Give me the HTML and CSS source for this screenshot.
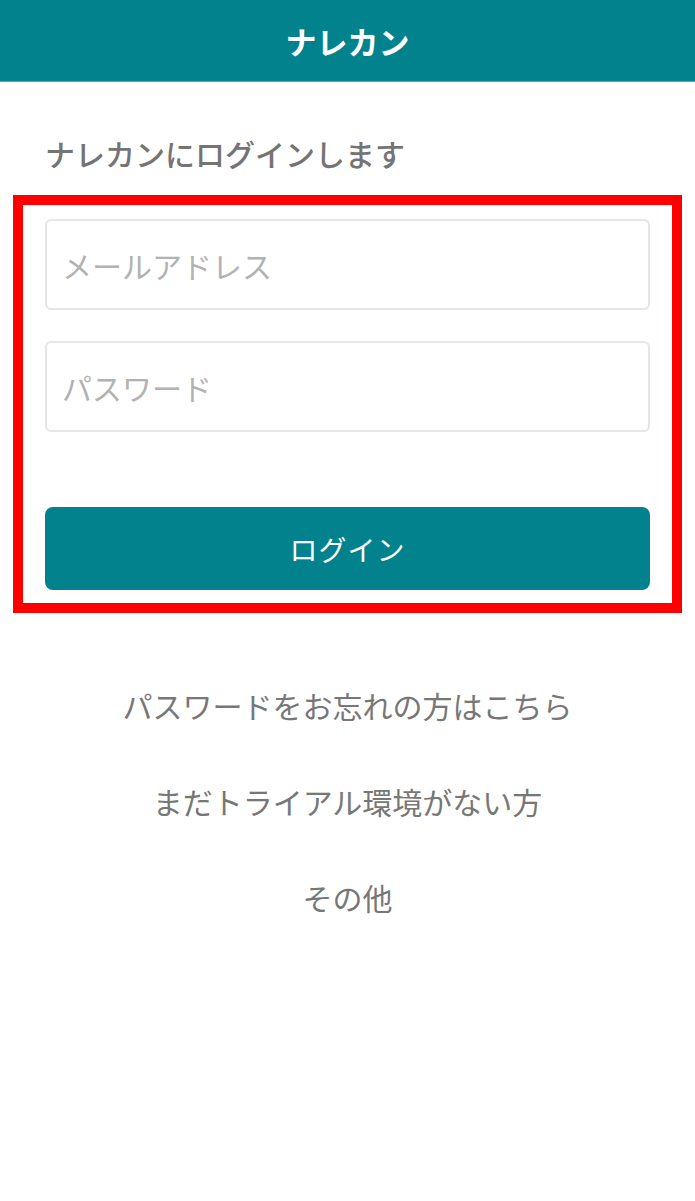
FILE: index.html
```html
<!DOCTYPE html>
<html lang="ja">
<head>
<meta charset="utf-8">
<title>ナレカン</title>
<link rel="stylesheet" href="styles.css">
</head>
<body>
<header class="app-header">
  <h1 class="app-title">ナレカン</h1>
</header>
<main class="page">
  <p class="lead">ナレカンにログインします</p>
  <form class="login-box">
    <input class="field" type="email" placeholder="メールアドレス">
    <input class="field field-password" type="password" placeholder="パスワード">
    <button class="login-button" type="button">ログイン</button>
  </form>
  <nav class="links">
    <a class="link" href="#">パスワードをお忘れの方はこちら</a>
    <a class="link" href="#">まだトライアル環境がない方</a>
    <a class="link" href="#">その他</a>
  </nav>
</main>
</body>
</html>
```

FILE: styles.css
```css
* {
  box-sizing: border-box;
}

html, body {
  margin: 0;
  padding: 0;
  background: #ffffff;
}

body {
  font-family: "Noto Sans CJK JP", "Noto Sans", sans-serif;
  color: #757575;
}

.app-header {
  height: 82px;
  background: #02828c;
  border-bottom: 1px solid #5aa9ae;
  display: flex;
  align-items: center;
  justify-content: center;
}

.app-title {
  margin: 0;
  font-size: 31px;
  font-weight: 700;
  color: #ffffff;
  line-height: 40px;
}

.page {
  display: flex;
  flex-direction: column;
}

.lead {
  margin: 51px 0 0 45px;
  font-size: 30px;
  font-weight: 500;
  line-height: 40px;
  color: #747474;
}

.login-box {
  margin: 22px 0 0 13px;
  width: 669px;
  height: 418px;
  border: 10px solid #ff0000;
  padding: 14px 22px 13px;
  display: flex;
  flex-direction: column;
}

.field {
  display: block;
  width: 100%;
  height: 91px;
  border: 2px solid #e6e6e6;
  border-radius: 6px;
  padding: 0 0 0 15px;
  font-family: inherit;
  font-size: 30px;
  color: #555;
  background: #fff;
  outline: none;
}

.field::placeholder {
  color: #b2b2b2;
}

.field-password {
  margin-top: 31px;
}

.login-button {
  margin-top: 75px;
  height: 83px;
  width: 100%;
  border: none;
  border-radius: 8px;
  background: #02828c;
  color: #ffffff;
  font-family: inherit;
  font-size: 28px;
  font-weight: 400;
  letter-spacing: 1px;
}

.links {
  margin-top: 72px;
  display: flex;
  flex-direction: column;
  align-items: center;
  gap: 56px;
}

.link {
  font-size: 30px;
  line-height: 40px;
  color: #777777;
  text-decoration: none;
}
```
